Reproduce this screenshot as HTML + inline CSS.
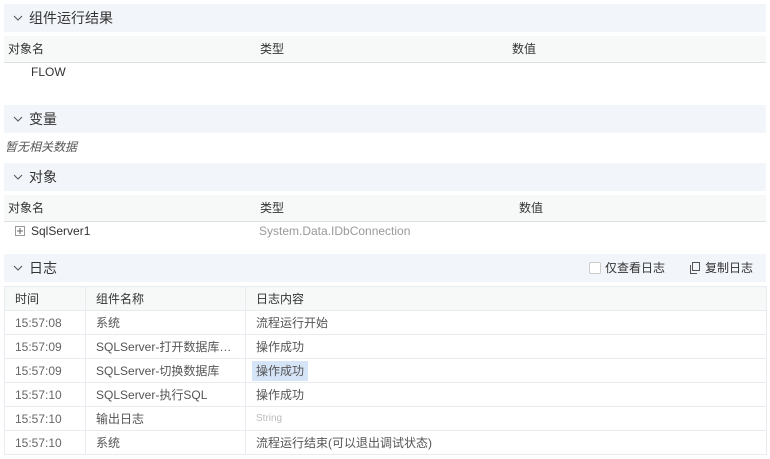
<!DOCTYPE html>
<html><head><meta charset="utf-8"><style>
body{margin:0;width:770px;height:459px;background:#fff;font-family:"Liberation Sans","Noto Sans CJK SC",sans-serif;font-size:12px;color:#333;position:relative;overflow:hidden}
.a{position:absolute}
.hd{position:absolute;left:4px;width:762px;height:28px;background:#f2f5fa;font-size:14px;line-height:28px}
.hd span{position:absolute;left:25px}
.hd svg{position:absolute;left:9px;top:11px}
.th{position:absolute;left:4px;width:762px;height:26px;background:#f7f8f8;border-bottom:1px solid #dde0e4;line-height:26px;color:#333}
table{position:absolute;left:4px;top:286px;width:763px;border-collapse:collapse;font-size:12px}
td{border:1px solid #e8ebf0;height:23px;padding:0 0 0 10px;color:#555;white-space:nowrap}
tr:first-child td{background:#f7f8f8;color:#333}
td.t{color:#666}
</style></head><body>
<div class="hd" style="top:4px"><svg width="10" height="6"><path d="M1 1L5 5L9 1" stroke="#555" fill="none"/></svg><span>组件运行结果</span></div>
<div class="th" style="top:36px"><span class="a" style="left:4px">对象名</span><span class="a" style="left:256px">类型</span><span class="a" style="left:508px">数值</span></div>
<div class="a" style="left:31px;top:65px;color:#333">FLOW</div>
<div class="hd" style="top:105px"><svg width="10" height="6"><path d="M1 1L5 5L9 1" stroke="#555" fill="none"/></svg><span>变量</span></div>
<div class="a" style="left:5px;top:138px;font-style:italic;color:#555">暂无相关数据</div>
<div class="hd" style="top:163px"><svg width="10" height="6"><path d="M1 1L5 5L9 1" stroke="#555" fill="none"/></svg><span>对象</span></div>
<div class="th" style="top:195px"><span class="a" style="left:4px">对象名</span><span class="a" style="left:256px">类型</span><span class="a" style="left:515px">数值</span></div>
<svg class="a" style="left:15px;top:226px" width="10" height="10"><rect x="0.5" y="0.5" width="9" height="9" fill="none" stroke="#999"/><path d="M2 5H8M5 2V8" stroke="#666"/></svg>
<div class="a" style="left:31px;top:224px;color:#333">SqlServer1</div>
<div class="a" style="left:259px;top:224px;color:#999">System.Data.IDbConnection</div>
<div class="hd" style="top:254px"><svg width="10" height="6"><path d="M1 1L5 5L9 1" stroke="#555" fill="none"/></svg><span>日志</span>
<div class="a" style="left:585px;top:8px;width:10px;height:10px;border:1px solid #ccc;border-radius:2px;background:#fff"></div>
<div class="a" style="left:601px;font-size:12px;color:#333">仅查看日志</div>
<svg class="a" style="left:686px;top:8px" width="10" height="12"><rect x="2.5" y="0.5" width="7" height="8" fill="none" stroke="#555"/><path d="M0.5 3V11.5H7" stroke="#555" fill="none"/></svg>
<div class="a" style="left:701px;font-size:12px;color:#333">复制日志</div></div>
<table>
<tr><td style="width:70px">时间</td><td style="width:149px">组件名称</td><td>日志内容</td></tr>
<tr><td class="t">15:57:08</td><td>系统</td><td>流程运行开始</td></tr>
<tr><td class="t">15:57:09</td><td>SQLServer-打开数据库…</td><td>操作成功</td></tr>
<tr><td class="t">15:57:09</td><td>SQLServer-切换数据库</td><td style="padding-left:6px"><span style="background:#d6e4f8;padding:3px 4px">操作成功</span></td></tr>
<tr><td class="t">15:57:10</td><td>SQLServer-执行SQL</td><td>操作成功</td></tr>
<tr><td class="t">15:57:10</td><td>输出日志</td><td style="color:#bbb;font-size:10px">String</td></tr>
<tr><td class="t">15:57:10</td><td>系统</td><td>流程运行结束(可以退出调试状态)</td></tr>
</table>
</body></html>
